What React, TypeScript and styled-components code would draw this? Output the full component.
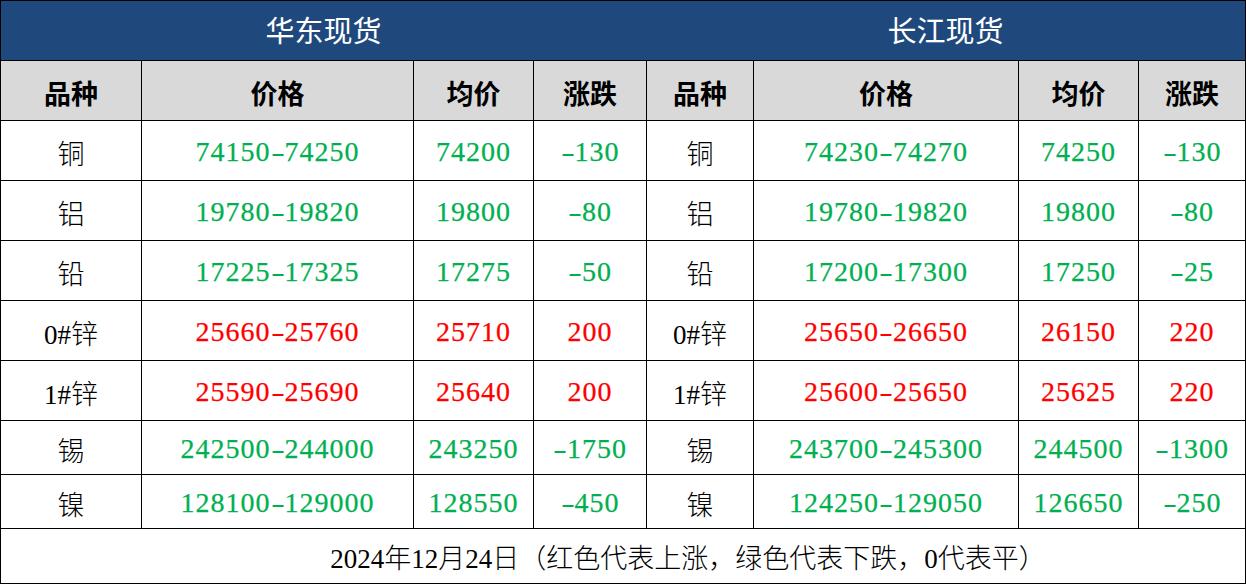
import styled, { createGlobalStyle } from "styled-components";

const GlobalStyle = createGlobalStyle`
    html, body {
        margin: 0;
        padding: 0;
        background: #ffffff;
    }
`

const Sheet = styled.div`
    display: grid;
    grid-template-columns: 140px 271px 119px 112px 106px 264px 119px 106px;
    grid-template-rows: 59px 59px repeat(5, 59px) 53px 53px 54px;
    gap: 1px;
    padding: 1px;
    width: 1246px;
    height: 584px;
    box-sizing: border-box;
    background: #000;
    font-family: "Liberation Serif", "Noto Sans CJK SC", serif;
`

const TitleBar = styled.div`
    grid-column: 1 / -1;
    display: grid;
    grid-template-columns: 645px 1fr;
    background: #1f497d;
    color: #fff;
    font-size: 29px;
`

const Title = styled.div`
    display: flex;
    align-items: center;
    justify-content: center;
    padding-bottom: 4px;
`

const Head = styled.div`
    display: flex;
    align-items: center;
    justify-content: center;
    padding-top: 3px;
    background: #d9d9d9;
    color: #000;
    font-size: 27px;
    font-weight: bold;
`

const Cell = styled.div<{ $tone?: "up" | "down" }>`
    display: flex;
    align-items: center;
    justify-content: center;
    padding-top: 3px;
    background: #fff;
    font-size: ${p => (p.$tone ? "28px" : "27px")};
    font-weight: ${p => (p.$tone ? "normal" : 300)};
    letter-spacing: ${p => (p.$tone ? "1px" : "0")};
    -webkit-text-stroke: ${p => (p.$tone ? "0.25px currentColor" : "0")};
    color: ${p => (p.$tone === "up" ? "#ff0000" : p.$tone === "down" ? "#00b050" : "#000")};
`

const Dash = styled.span`
    display: inline-block;
    width: 14px;
    text-align: center;
    transform: scaleX(1.5);
    letter-spacing: 0;
    -webkit-text-stroke: 0;
`

const Footer = styled.div`
    grid-column: 1 / -1;
    display: flex;
    align-items: center;
    justify-content: center;
    padding-left: 130px;
    background: #fff;
    font-size: 27px;
    font-weight: 300;
    color: #000;
`

type Row = [string, string, string, string]

const east: Row[] = [
    ["铜", "74150-74250", "74200", "-130"],
    ["铝", "19780-19820", "19800", "-80"],
    ["铅", "17225-17325", "17275", "-50"],
    ["0#锌", "25660-25760", "25710", "200"],
    ["1#锌", "25590-25690", "25640", "200"],
    ["锡", "242500-244000", "243250", "-1750"],
    ["镍", "128100-129000", "128550", "-450"],
]

const yangtze: Row[] = [
    ["铜", "74230-74270", "74250", "-130"],
    ["铝", "19780-19820", "19800", "-80"],
    ["铅", "17200-17300", "17250", "-25"],
    ["0#锌", "25650-26650", "26150", "220"],
    ["1#锌", "25600-25650", "25625", "220"],
    ["锡", "243700-245300", "244500", "-1300"],
    ["镍", "124250-129050", "126650", "-250"],
]

const heads = ["品种", "价格", "均价", "涨跌"]

// минус и тире рисуем шире, как в исходной таблице
const Num = ({ text }: { text: string }) => {
    const parts = text.split("-")
    return (
        <>
            {parts.map((p, i) => (
                <span key={i}>
                    {i > 0 && <Dash>-</Dash>}
                    {p}
                </span>
            ))}
        </>
    )
}

const Group = ({ row }: { row: Row }) => {
    const tone = row[3].startsWith("-") ? "down" : "up"
    return (
        <>
            <Cell>{row[0]}</Cell>
            <Cell $tone={tone}><Num text={row[1]} /></Cell>
            <Cell $tone={tone}>{row[2]}</Cell>
            <Cell $tone={tone}><Num text={row[3]} /></Cell>
        </>
    )
}

const App = () => {
    return (
        <>
            <GlobalStyle />
            <Sheet>
                <TitleBar>
                    <Title>华东现货</Title>
                    <Title>长江现货</Title>
                </TitleBar>

                {[...heads, ...heads].map((h, i) => (
                    <Head key={i}>{h}</Head>
                ))}

                {east.flatMap((row, i) => [
                    <Group key={"e" + i} row={row} />,
                    <Group key={"y" + i} row={yangtze[i]} />,
                ])}

                <Footer>2024年12月24日（红色代表上涨，绿色代表下跌，0代表平）</Footer>
            </Sheet>
        </>
    )
}

export default App
